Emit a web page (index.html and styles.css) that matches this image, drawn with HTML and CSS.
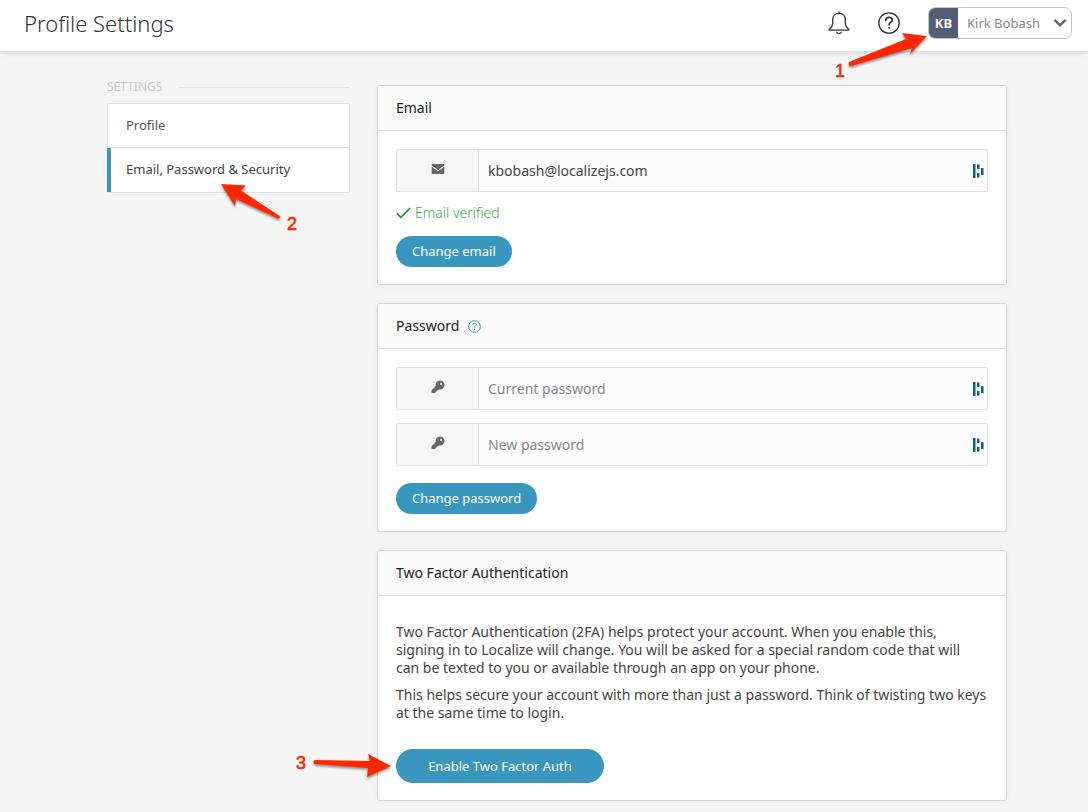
FILE: index.html
```html
<!DOCTYPE html>
<html lang="en">
<head>
<meta charset="utf-8">
<meta name="viewport" content="width=device-width, initial-scale=1">
<title>Profile Settings</title>
<link rel="stylesheet" href="styles.css">
</head>
<body>
<header class="topbar">
  <h1 class="topbar-title">Profile Settings</h1>
  <div class="topbar-actions">
    <button class="icon-button" type="button" aria-label="Notifications">
      <svg width="22" height="24" viewBox="0 0 22 24" fill="none" stroke="#333" stroke-width="1.3" stroke-linejoin="round" stroke-linecap="round">
        <path d="M11 .8v1.500M11 2.300c-4 0-6.300 2.800-6.300 6.300v4c0 2.500-1.200 3.900-3.300 5.700-.5.500-.3.900.3.900h18.600c.6 0 .8-.4.3-.9-2.100-1.800-3.300-3.200-3.300-5.700v-4c0-3.500-2.300-6.300-6.300-6.300z"/>
        <path d="M8.700 21.300c.5.900 1.300 1.300 2.300 1.300s1.800-.4 2.300-1.300"/>
      </svg>
    </button>
    <button class="icon-button" type="button" aria-label="Help">
      <svg width="24" height="24" viewBox="0 0 24 24" fill="none" stroke="#333" stroke-linecap="round">
        <circle cx="12" cy="12" r="10.200" stroke-width="1.300"/>
        <path d="M8.700 9.300c.2-1.900 1.500-2.900 3.300-2.900s3.300 1.100 3.300 2.700c0 2.300-3.200 2.300-3.200 4.600" stroke-width="1.700"/>
        <circle cx="12.100" cy="16.800" r=".5" fill="#333"/>
      </svg>
    </button>
    <div class="account">
      <button class="account-button" type="button">
        <span class="account-initials">KB</span>
        <span class="account-name">Kirk Bobash</span>
        <svg class="account-chevron" width="14" height="10" viewBox="0 0 14 10" fill="none" stroke="#666" stroke-width="2.500"><path d="M1.500 1.800L7 7.300l5.500-5.500"/></svg>
      </button>
      <svg class="callout callout-account" width="96" height="50" viewBox="0 0 96 50">
        <path class="arrow" d="M95 7L70 4l4 6-57 23c-1 2 0 4 2 4l61-18-2 6z"/>
        <text x="3" y="48">1</text>
      </svg>
    </div>
  </div>
</header>

<div class="layout">
  <nav class="sidebar" aria-label="Settings">
    <h2 class="sidebar-heading">SETTINGS</h2>
    <ul class="menu">
      <li class="menu-item"><a class="menu-link" href="#profile">Profile</a></li>
      <li class="menu-item menu-item-active">
        <a class="menu-link" href="#security" aria-current="page">Email, Password &amp; Security</a>
        <svg class="callout callout-menu" width="84" height="52" viewBox="0 0 84 52">
          <path class="arrow" d="M0 4l25 1.500-5 5 38 25c2 1 1 3-1 3L15 19l-1 7z"/>
          <text x="66" y="50">2</text>
        </svg>
      </li>
    </ul>
  </nav>

  <main class="content">
    <section class="card">
      <h2 class="card-header">Email</h2>
      <form class="card-body">
        <div class="field">
          <label class="field-icon" for="email" aria-label="Email">
            <svg width="14" height="12" viewBox="0 0 14 12"><path fill="#666" d="M1.500 1h11c.5 0 .8.4.8.8v.8L7 7 .7 2.600v-.8c0-.4.3-.8.8-.8zM.7 3.800L7 8.200l6.300-4.400v6.400c0 .5-.3.8-.8.8h-11c-.5 0-.8-.3-.8-.8z"/></svg>
          </label>
          <input class="field-input" id="email" type="email" value="kbobash@localizejs.com">
          <svg class="field-mark" width="12" height="14" viewBox="0 0 12 14" fill="#0f6175"><path d="M1 0h2.500v14H1zM5 0.500h2.500v4.500H5zM5 9h2.500v4.500H5zM9 4h2.500v7H9z"/></svg>
        </div>
        <p class="verified">
          <svg width="15" height="12" viewBox="0 0 15 12" fill="none" stroke="#1a8a1e" stroke-width="1.500"><path d="M.8 6.300l4 4.200L14 1"/></svg>
          Email verified
        </p>
        <button class="button" type="button">Change email</button>
      </form>
    </section>

    <section class="card">
      <h2 class="card-header">Password
        <svg class="hint" width="13" height="13" viewBox="0 0 13 13" fill="none" stroke="#3996bf"><circle cx="6.500" cy="6.500" r="5.800"/><path d="M4.700 5c.1-1 .8-1.600 1.800-1.600s1.800.6 1.800 1.500c0 1.200-1.700 1.200-1.700 2.700M6.600 8.700v1.100"/></svg>
      </h2>
      <form class="card-body">
        <div class="field">
          <label class="field-icon" for="current" aria-label="Current password">
            <svg width="14" height="14" viewBox="0 0 14 14"><path fill="#666" fill-rule="evenodd" d="M9 .5a4.500 4.500 0 1 1-1 8.900L6.800 10.600H5.600v1.200H4.400V13H1.200c-.4 0-.7-.3-.7-.7v-2.100L4.700 6A4.500 4.500 0 0 1 9 .5zM10 2.700a1.100 1.100 0 1 0 0 2.200 1.100 1.100 0 0 0 0-2.200z"/></svg>
          </label>
          <input class="field-input" id="current" type="password" placeholder="Current password">
          <svg class="field-mark" width="12" height="14" viewBox="0 0 12 14" fill="#0f6175"><path d="M1 0h2.500v14H1zM5 0.500h2.500v4.500H5zM5 9h2.500v4.500H5zM9 4h2.500v7H9z"/></svg>
        </div>
        <div class="field">
          <label class="field-icon" for="new" aria-label="New password">
            <svg width="14" height="14" viewBox="0 0 14 14"><path fill="#666" fill-rule="evenodd" d="M9 .5a4.500 4.500 0 1 1-1 8.900L6.800 10.600H5.600v1.200H4.400V13H1.200c-.4 0-.7-.3-.7-.7v-2.100L4.700 6A4.500 4.500 0 0 1 9 .5zM10 2.700a1.100 1.100 0 1 0 0 2.200 1.100 1.100 0 0 0 0-2.200z"/></svg>
          </label>
          <input class="field-input" id="new" type="password" placeholder="New password">
          <svg class="field-mark" width="12" height="14" viewBox="0 0 12 14" fill="#0f6175"><path d="M1 0h2.500v14H1zM5 0.500h2.500v4.500H5zM5 9h2.500v4.500H5zM9 4h2.500v7H9z"/></svg>
        </div>
        <button class="button button-after-fields" type="button">Change password</button>
      </form>
    </section>

    <section class="card">
      <h2 class="card-header">Two Factor Authentication</h2>
      <div class="card-body">
        <div class="prose">
          <p>Two Factor Authentication (2FA) helps protect your account. When you enable this,<br>signing in to Localize will change. You will be asked for a special random code that will<br>can be texted to you or available through an app on your phone.</p>
          <p>This helps secure your account with more than just a password. Think of twisting two keys<br>at the same time to login.</p>
        </div>
        <div class="enable">
          <button class="button button-large" type="button">Enable Two Factor Auth</button>
          <svg class="callout callout-enable" width="98" height="28" viewBox="0 0 98 28">
            <path class="arrow" d="M97 15L74 3l2 7-55-1c-2 0-2 4 0 4l53 4-1 9z"/>
            <text x="2" y="18">3</text>
          </svg>
        </div>
      </div>
    </section>
  </main>
</div>
</body>
</html>
```
FILE: styles.css
```css
* { box-sizing: border-box; }

body {
  margin: 0;
  background: #f5f5f5;
  color: #444;
  font: 400 14px/18px "Noto Sans", "Open Sans", sans-serif;
}

h1, h2, p, ul { margin: 0; padding: 0; }
button, input { font: inherit; }
svg { display: block; flex: none; }

.topbar {
  position: relative;
  display: flex;
  align-items: center;
  justify-content: space-between;
  min-height: 51px;
  padding: 0 16px 6px 24px;
  background: #fff;
  box-shadow: 0 1px 6px rgba(0, 0, 0, 0.16);
}
.topbar-title { color: #333; font-size: 22px; font-weight: 300; line-height: 28px; }
.topbar-actions { display: flex; align-items: center; }
.icon-button {
  margin-right: 27px;
  padding: 0;
  border: 0;
  background: none;
}

.account { position: relative; }
.account-button {
  display: flex;
  align-items: center;
  width: 144px;
  height: 32px;
  padding: 0;
  overflow: hidden;
  border: 1px solid #c4c4c4;
  border-radius: 7px;
  background: #fff;
  color: #888;
  font-size: 13px;
}
.account-initials {
  width: 29px;
  background: #535e78;
  color: #fff;
  font-size: 13px;
  font-weight: 700;
  line-height: 30px;
  text-align: center;
}
.account-name { flex: 1; padding-left: 9px; text-align: left; white-space: nowrap; }
.account-chevron { margin-right: 4px; }

.callout {
  position: absolute;
  z-index: 2;
  overflow: visible;
  pointer-events: none;
  fill: #ff2600;
  stroke: #ff2600;
  stroke-width: 0.6;
  font: 400 18px "Liberation Sans", Arial, sans-serif;
}
.arrow { filter: drop-shadow(0 2px 1px rgba(0, 0, 0, 0.4)); stroke: none; }
.callout-account { right: 144px; top: 22px; }
.callout-menu { left: 113px; top: 32px; }
.callout-enable { right: 100%; top: 2px; margin-right: 4px; }

.layout {
  display: grid;
  grid-template-columns: 27fr 70fr;
  gap: 27px;
  padding: 34px 81px 10px 107px;
}

.sidebar { margin-top: -4px; }
.sidebar-heading {
  display: flex;
  align-items: center;
  gap: 17px;
  margin-bottom: 10px;
  color: #c8c8c8;
  font-size: 12px;
  font-weight: 400;
  line-height: 12px;
}
.sidebar-heading::after { content: ""; flex: 1; border-top: 1px solid #e0e0e0; }
.menu {
  border: 1px solid #ddd;
  border-radius: 2px;
  background: #fff;
  list-style: none;
}
.menu-item { position: relative; }
.menu-item + .menu-item { border-top: 1px solid #ddd; }
.menu-link {
  display: block;
  padding: 12px 18px 13px;
  color: #555;
  font-size: 13px;
  text-decoration: none;
}
.menu-item-active .menu-link {
  margin-left: -1px;
  padding-left: 15px;
  padding-bottom: 14px;
  border-left: 4px solid #3996bf;
  color: #444;
}

.content { display: grid; gap: 18px; min-width: 0; }
.card {
  border: 1px solid #d5d5d5;
  border-radius: 3px;
  background: #fff;
  box-shadow: 0 0 8px rgba(0, 0, 0, 0.04);
}
.card-header {
  display: flex;
  align-items: center;
  gap: 9px;
  padding: 13px 18px;
  border-bottom: 1px solid #e0e0e0;
  border-radius: 2px 2px 0 0;
  background: #fafafa;
  box-shadow: 0 2px 6px rgba(0, 0, 0, 0.03);
  color: #222;
  font-size: 14px;
  font-weight: 400;
}
.card-body { padding: 18px 18px 17px; }

.field {
  display: flex;
  align-items: center;
  height: 43px;
  border: 1px solid #e0e0e0;
  border-radius: 2px;
  background: #fcfcfc;
}
.field + .field { margin-top: 13px; }
.field-icon {
  display: flex;
  align-items: center;
  justify-content: center;
  align-self: stretch;
  width: 82px;
  padding-bottom: 4px;
  border-right: 1px solid #e0e0e0;
  background: #f6f6f6;
}
.field-input {
  flex: 1;
  min-width: 0;
  padding: 0 9px;
  border: 0;
  background: none;
  color: #444;
}
.field-input::placeholder { color: #888; opacity: 1; }
.field-mark { margin-right: 3px; }

.verified {
  display: flex;
  align-items: center;
  gap: 4px;
  margin: 12px 0 14px;
  color: #3fa344;
  font-weight: 300;
}

.button {
  display: block;
  min-height: 31px;
  padding: 0 16px 1px;
  border: 0;
  border-radius: 17px;
  background: #3996bf;
  color: #fff;
  font-size: 13px;
}
.button-after-fields { margin-top: 17px; }
.button-large { min-width: 208px; min-height: 34px; }

.prose { display: grid; gap: 9px; padding: 9px 0 27px; }
.enable { position: relative; }
```
